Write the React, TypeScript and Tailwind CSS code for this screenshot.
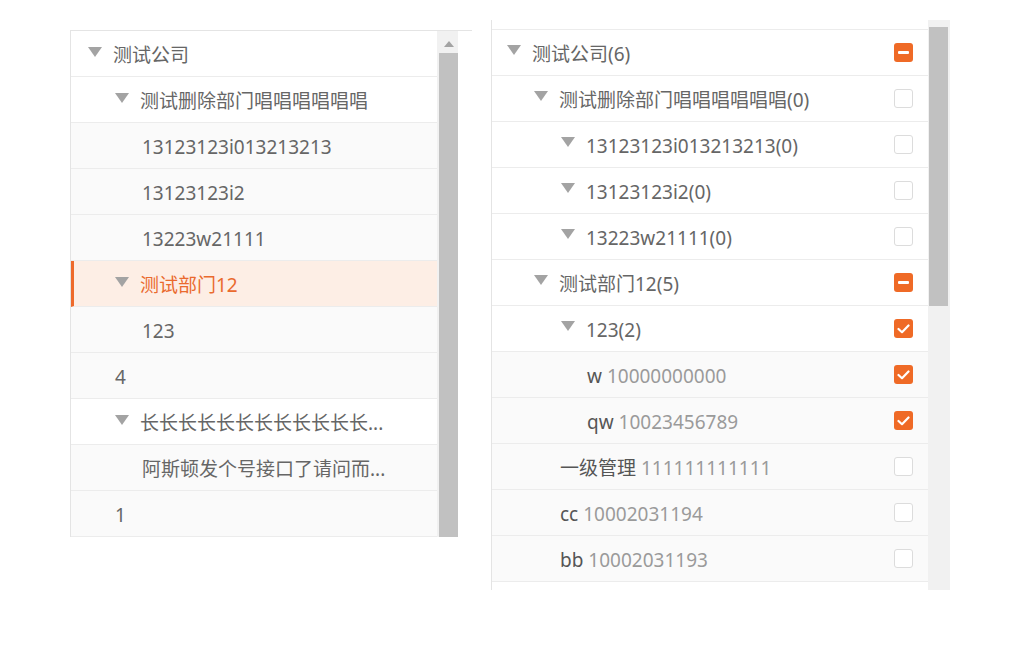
import React from "react";

type LRow = { level: number; text: string; parent?: boolean; bg: "w" | "g" | "h" };

const leftRows: LRow[] = [
  { level: 0, text: "测试公司", parent: true, bg: "w" },
  { level: 1, text: "测试删除部门唱唱唱唱唱唱", parent: true, bg: "w" },
  { level: 2, text: "13123123i013213213", bg: "g" },
  { level: 2, text: "13123123i2", bg: "g" },
  { level: 2, text: "13223w21111", bg: "g" },
  { level: 1, text: "测试部门12", parent: true, bg: "h" },
  { level: 2, text: "123", bg: "g" },
  { level: 1, text: "4", bg: "g" },
  { level: 1, text: "长长长长长长长长长长长长...", parent: true, bg: "w" },
  { level: 2, text: "阿斯顿发个号接口了请问而...", bg: "g" },
  { level: 1, text: "1", bg: "g" },
];

type RRow = {
  level: number;
  text: string;
  num?: string;
  parent?: boolean;
  state: "none" | "ind" | "on";
  bg: "w" | "g";
};

const rightRows: RRow[] = [
  { level: 0, text: "测试公司(6)", parent: true, state: "ind", bg: "w" },
  { level: 1, text: "测试删除部门唱唱唱唱唱唱(0)", parent: true, state: "none", bg: "w" },
  { level: 2, text: "13123123i013213213(0)", parent: true, state: "none", bg: "w" },
  { level: 2, text: "13123123i2(0)", parent: true, state: "none", bg: "w" },
  { level: 2, text: "13223w21111(0)", parent: true, state: "none", bg: "w" },
  { level: 1, text: "测试部门12(5)", parent: true, state: "ind", bg: "w" },
  { level: 2, text: "123(2)", parent: true, state: "on", bg: "w" },
  { level: 3, text: "w", num: "10000000000", state: "on", bg: "g" },
  { level: 3, text: "qw", num: "10023456789", state: "on", bg: "g" },
  { level: 2, text: "一级管理", num: "111111111111", state: "none", bg: "g" },
  { level: 2, text: "cc", num: "10002031194", state: "none", bg: "g" },
  { level: 2, text: "bb", num: "10002031193", state: "none", bg: "g" },
];

function Arrow({ right }: { right?: boolean }) {
  return (
    <span className={"flex w-[25px] shrink-0 items-center " + (right ? "pb-[6px]" : "pb-[3px]")}>
      <svg width="14" height="10" viewBox="0 0 14 10">
        <polygon points="0,0 14,0 7,10" fill="#a3a3a3" />
      </svg>
    </span>
  );
}

function Check({ state }: { state: RRow["state"] }) {
  if (state === "none")
    return <span className="block h-[19px] w-[19px] rounded-[3px] border border-[#dcdcdc] bg-white" />;
  return (
    <span className="flex h-[19px] w-[19px] items-center justify-center rounded-[3px] bg-[#ef6a26]">
      {state === "ind" ? (
        <span className="block h-[3px] w-[11px] rounded-[1px] bg-white" />
      ) : (
        <svg width="13" height="10" viewBox="0 0 13 10">
          <polyline points="1.5,5 5,8.2 11.5,1.5" fill="none" stroke="#fff" strokeWidth="2.2" strokeLinecap="round" strokeLinejoin="round" />
        </svg>
      )}
    </span>
  );
}

const font = { fontFamily: '"Noto Sans", "Noto Sans CJK SC", sans-serif' };

export default function App() {
  return (
    <div className="flex h-[651px] w-[1021px] items-start bg-white text-[19px]" style={font}>
      {/* Left panel */}
      <div className="ml-[70px] mt-[30px] w-[402px] border-t border-[#e4e4e4]">
        <div className="flex">
          <div className="w-[367px] border-l border-[#e4e4e4]">
            {leftRows.map((r, i) => (
              <div
                key={i}
                className={
                  "flex h-[46px] items-center border-b border-[#ececec] " +
                  (r.bg === "w"
                    ? "bg-white text-[#666]"
                    : r.bg === "g"
                    ? "bg-[#fafafa] text-[#666]"
                    : "border-l-[3px] border-l-[#ee6a2b] bg-[#fdeee5] text-[#ea6a2e]")
                }
                style={{ paddingLeft: 17 + 27 * r.level - (r.bg === "h" ? 3 : 0) }}
              >
                {r.parent && <Arrow />}
                <span className="whitespace-nowrap pt-[4px]">{r.text}</span>
              </div>
            ))}
          </div>
          <div className="flex w-[21px] flex-col bg-[#f1f1f1]">
            <div className="flex h-[22px] items-start justify-center pl-[2px] pt-[10px]">
              <svg width="10" height="6" viewBox="0 0 10 6">
                <polygon points="5,0 10,6 0,6" fill="#a3a3a3" />
              </svg>
            </div>
            <div className="ml-[2px] flex-1 bg-[#c1c1c1]" />
          </div>
        </div>
      </div>

      {/* Right panel */}
      <div className="ml-[19px] mt-[20px] flex h-[570px]">
        <div className="w-[437px] overflow-hidden border-l border-[#e4e4e4]">
          <div className="h-[10px] border-b border-[#ececec] bg-white" />
          {rightRows.map((r, i) => (
            <div
              key={i}
              className={
                "flex h-[46px] items-center border-b border-[#ececec] pr-[15px] " +
                (r.bg === "w" ? "bg-white" : "bg-[#fafafa]")
              }
              style={{ paddingLeft: 15 + 27 * r.level - (r.parent ? 0 : 1) }}
            >
              {r.parent && <Arrow right />}
              <span className="flex-1 whitespace-nowrap pt-[4px]">
                <span className={r.num ? "text-[#555]" : "text-[#666]"}>{r.text}</span>
                {r.num && <span className="text-[#9a9a9a]"> {r.num}</span>}
              </span>
              <Check state={r.state} />
            </div>
          ))}
          <div className="h-[8px] bg-white" />
        </div>
        <div className="w-[22px] bg-[#f1f1f1] pt-[7px]">
          <div className="ml-[1px] h-[279px] w-[19px] bg-[#c1c1c1]" />
        </div>
      </div>
    </div>
  );
}
